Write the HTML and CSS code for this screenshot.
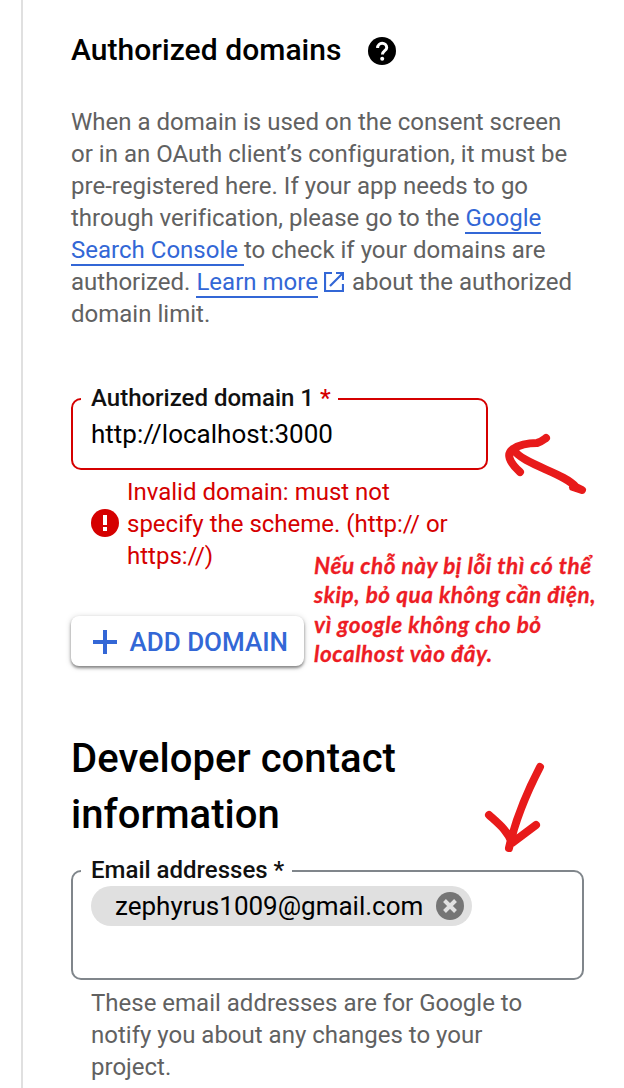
FILE: index.html
```html
<!DOCTYPE html>
<html lang="en">
<head>
<meta charset="utf-8">
<title>OAuth consent screen</title>
<link rel="stylesheet" href="styles.css">
</head>
<body>
<main class="panel">
  <h3 class="subtitle"><span>Authorized domains</span>
    <svg class="help" viewBox="0 0 28 28"><circle cx="14" cy="14" r="14"/><path d="M9.6 11C9.6 4.7 18.7 5 18.7 10.8C18.7 13.6 14.4 13.9 14.4 17.5" fill="none" stroke="#fff" stroke-width="3"/><circle cx="14.2" cy="21.8" r="2" fill="#fff"/></svg>
  </h3>
  <p class="intro">When a domain is used on the consent screen<br>or in an OAuth client’s configuration, it must be<br>pre-registered here. If your app needs to go<br>through verification, please go to the <a class="link">Google</a><br><a class="link">Search Console </a>to check if your domains are<br>authorized. <a class="link">Learn more</a><svg class="external" viewBox="0 0 20 20"><path d="M8 1H1V19H19V12M12 1H19V8M18.5 1.5L6 14"/></svg> about the authorized<br>domain limit.</p>

  <fieldset class="field field-error">
    <legend>Authorized domain 1 <span class="required">*</span></legend>
    <div class="value">http://localhost:3000</div>
  </fieldset>
  <div class="error">
    <svg class="alert" viewBox="0 0 28 28"><circle cx="14" cy="14" r="14"/><path d="M14 6v10M14 18v4" stroke="#fff" stroke-width="4"/></svg>
    <p>Invalid domain: must not<br>specify the scheme. (http:// or<br>https://)</p>
  </div>
  <button class="add"><svg class="plus" viewBox="0 0 24 24"><path d="M12 0v24M0 12h24"/></svg><span>ADD DOMAIN</span></button>

  <h2 class="title">Developer contact<br>information</h2>
  <fieldset class="field field-email">
    <legend>Email addresses *</legend>
    <div class="chip"><span>zephyrus1009@gmail.com</span><svg class="remove" viewBox="0 0 28 28"><circle cx="14" cy="14" r="14"/><path d="M8.5 8.5l11 11M19.5 8.5l-11 11"/></svg></div>
  </fieldset>
  <p class="hint">These email addresses are for Google to<br>notify you about any changes to your<br>project.</p>
</main>
<p class="note">Nếu chỗ này bị lỗi thì có thể<br>skip, bỏ qua không cần điện,<br>vì google không cho bỏ<br>localhost vào đây.</p>
<svg class="ink" viewBox="0 0 624 1088"><path d="M546 438C542 441 541 442 537 443C525 443 519 445 513 449C506 454 509 462 520 472M513 449C523 465 563 472 576 487L582 490L573 487M540 767C527 792 516 817 509 848M489 815C499 824 508 831 512 843L536 825"/></svg>
</body>
</html>
```

FILE: styles.css
```css
* { box-sizing: border-box; }
body { margin: 0; background: #fff; font-family: Roboto, sans-serif; font-size: 24px; line-height: 32px; color: #000; position: relative; height: 1088px; overflow: hidden; }
p, h2, h3 { margin: 0; }
svg { flex: none; }
.panel { margin-left: 21px; border-left: 2px solid #e0e0e0; padding: 30px 40px 0 48px; height: 1088px; white-space: nowrap; }
.subtitle { display: flex; align-items: center; gap: 26px; height: 40px; font-size: 30px; font-weight: 500; letter-spacing: .05px; }
.help { width: 28px; height: 28px; margin-top: 2px; }
.intro { margin-top: 36px; color: #616161; letter-spacing: .01px; }
.link { color: #3367d6; border-bottom: 2px solid #3367d6; white-space: pre; }
.external { width: 20px; height: 20px; margin: 0 2px 0 6px; vertical-align: -2px; fill: none; stroke: #3367d6; stroke-width: 2.2; }
.field { margin: 0; border: 2px solid #80868b; border-radius: 10px; padding: 0 18px 0 8px; }
.field legend { padding: 0 8px 0 10px; font-weight: 500; color: #111; height: 32px; }
.field-error { width: 417px; height: 88px; margin-top: 52px; border-color: #d50000; }
.field-error legend { height: 34px; padding-right: 7px; }
.required { color: #d50000; margin-left: 0; }
.value { padding-left: 10px; font-size: 26px; line-height: 36px; }
.error { display: flex; align-items: center; gap: 8px; margin: 6px 0 0 20px; color: #d50000; }
.alert { width: 28px; height: 28px; margin-top: -2px; fill: #d50000; }
.add { display: flex; align-items: center; gap: 12.5px; width: 233px; height: 50px; margin-top: 44px; padding: 2px 0 0 22px; border: 0; border-radius: 8px; background: #fff; box-shadow: 0 2px 3px rgba(0,0,0,.42), 0 1px 6px rgba(0,0,0,.18); color: #3367d6; font: 500 26px/32px Roboto, sans-serif; }
.plus { width: 24px; height: 24px; stroke: #3367d6; stroke-width: 4; }
.title { margin-top: 65px; font-size: 40px; line-height: 56px; font-weight: 500; letter-spacing: .05px; }
.field-email { width: 513px; height: 125px; margin-top: 12px; }
.field-email legend { height: 31px; line-height: 30px; }
.chip { display: flex; align-items: center; justify-content: space-between; width: 381px; height: 40px; margin-left: 10px; padding: 0 8px 0 24px; border-radius: 20px; background: #e0e0e0; font-size: 26px; }
.remove { width: 28px; height: 28px; fill: #757575; }
.remove path { stroke: #e0e0e0; stroke-width: 4; }
.hint { margin: 7px 0 0 20px; color: #616161; }
.note { position: absolute; left: 314px; top: 551px; font: italic 700 22.5px/29.3px Lato, "Noto Sans", sans-serif; letter-spacing: .57px; -webkit-text-stroke: .3px #ed1c24; color: #ed1c24; white-space: nowrap; }
.ink { position: absolute; left: 0; top: 0; width: 624px; height: 1088px; pointer-events: none; fill: none; stroke: #e81b1b; stroke-width: 8; stroke-linecap: round; stroke-linejoin: round; }
```
